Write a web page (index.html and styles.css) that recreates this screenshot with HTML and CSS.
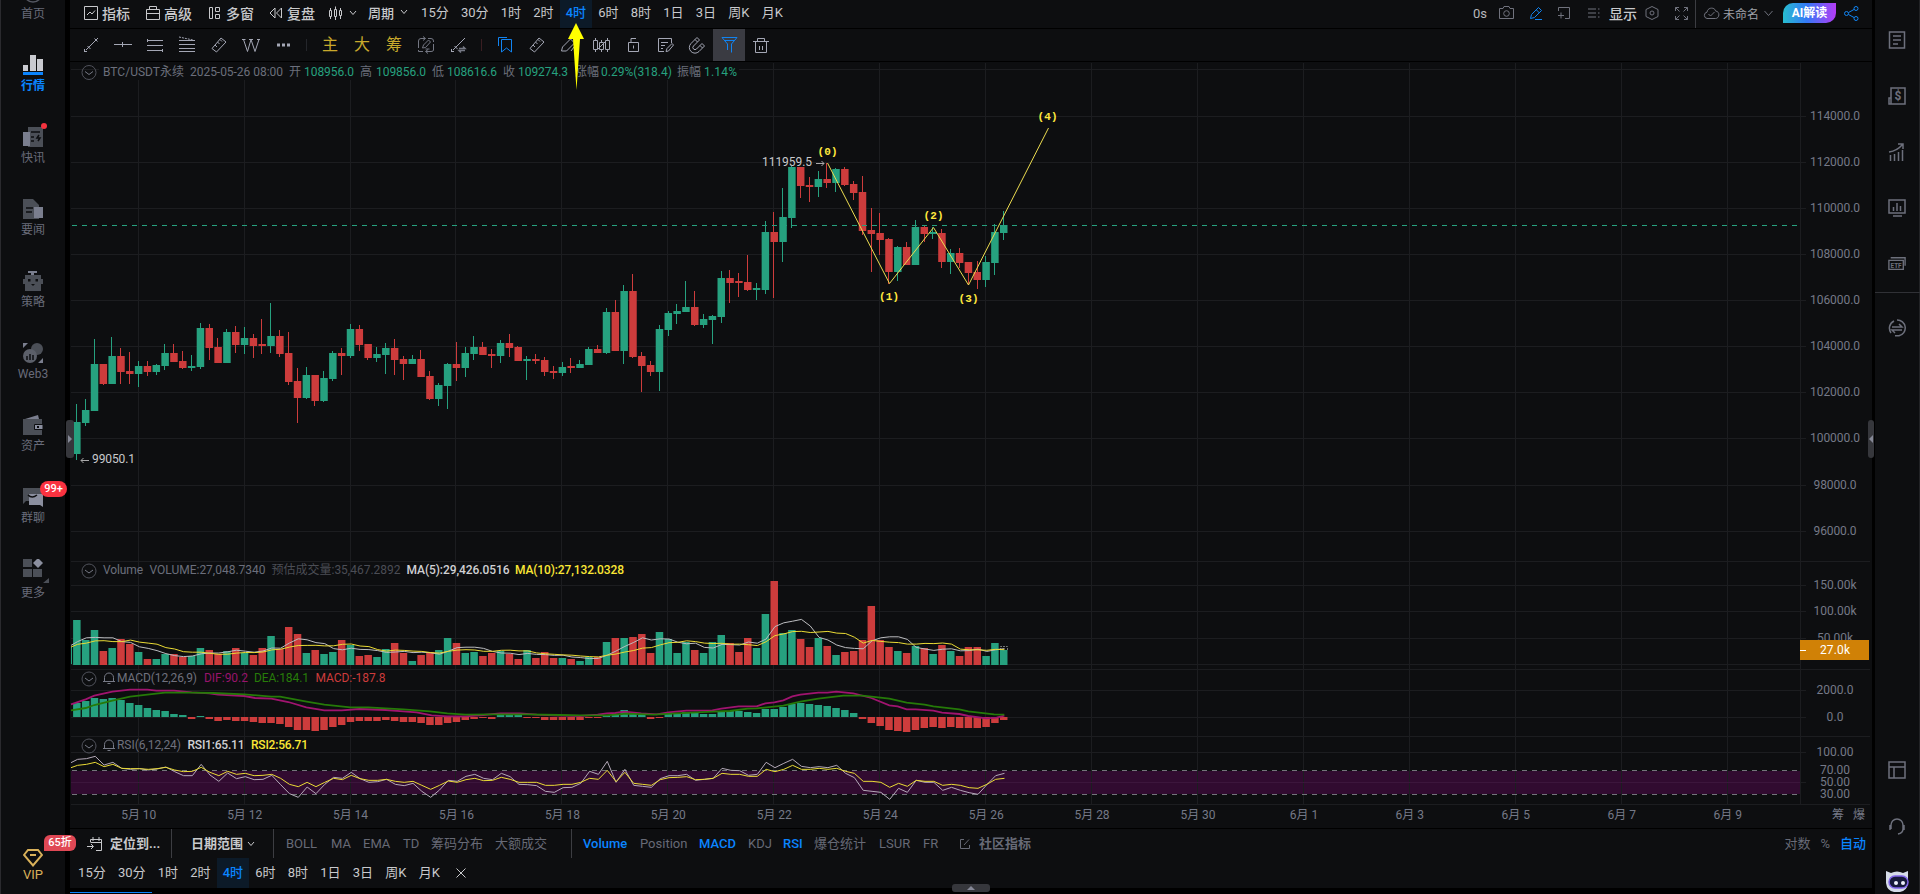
FILE: index.html
```html
<!DOCTYPE html>
<html lang="zh-CN">
<head>
    <meta charset="UTF-8">
    <meta name="viewport" content="width=device-width, initial-scale=1.0">
    <title>BTC/USDT永续</title>
    <link rel="stylesheet" href="styles.css">
</head>
<body>

<div class="app">
    <nav class="sidebar">
        <div class="nav-item">
            <svg width="20" height="20" viewBox="0 0 20 20"><circle cx="10" cy="10" r="9" fill="none" stroke="#555862" stroke-width="1.5"/></svg>
            <span>首页</span>
        </div>
        <div class="nav-item active">
            <svg width="20" height="20" viewBox="0 0 20 20"><path fill="#c9cad0" d="M0 10h5v6H0zM7 0h6v16H7zM14 4h6v12h-6z"/><path fill="#0a84ff" d="M0 17h20v3H0z"/></svg>
            <span>行情</span>
        </div>
        <div class="nav-item">
            <svg width="20" height="20" viewBox="0 0 20 20"><path fill="#4b4f57" d="M5 0h15v20H5z"/><path fill="#7a7e8e" d="M0 5h7v14H0z"/><path stroke="#0d0e10" stroke-width="1.5" fill="none" d="M8 5h9M8 10h3M8 14h3M16 8l-2 3h3l-2 3"/></svg>
            <i class="dot"></i>
            <span>快讯</span>
        </div>
        <div class="nav-item">
            <svg width="20" height="20" viewBox="0 0 20 20"><path fill="#4b4f57" d="M0 0h10l6 6v14H0z"/><path fill="#7a7e8e" d="M11 8h9v11h-9z"/><path stroke="#0d0e10" stroke-width="1.3" d="M3 9h7M3 13h6"/></svg>
            <span>要闻</span>
        </div>
        <div class="nav-item">
            <svg width="20" height="20" viewBox="0 0 20 20"><path fill="#7a7e8e" d="M5 0h9v2h-3v2H8V2H5z"/><path fill="#4b4f57" d="M2 4h16v16H2zM0 8h20v5H0z"/><path fill="#0d0e10" d="M5 8h2.500v2.500H5zM12.500 8H15v2.500h-2.500zM8 13h4l-2 2z"/></svg>
            <span>策略</span>
        </div>
        <div class="nav-item">
            <svg width="20" height="20" viewBox="0 0 20 20"><circle cx="14" cy="6" r="6" fill="#4b4f57"/><circle cx="7" cy="13" r="7" fill="#5b5f69"/><path fill="#7a7e8e" d="M0 0h5L0 5zM20 15v5h-5z"/><path stroke="#0d0e10" stroke-width="1.500" d="M4 13v4M7 11v6M10 12v5"/></svg>
            <span>Web3</span>
        </div>
        <div class="nav-item">
            <svg width="20" height="20" viewBox="0 0 20 20"><path fill="#7a7e8e" d="M2 4l13-4 1 4z"/><path fill="#4b4f57" d="M0 4h19v16H0z"/><path fill="#8b8f9f" stroke="#0d0e10" d="M11.500 9.500H20v5h-8.500z"/><path fill="#0d0e10" d="M14 11h2v2h-2z"/></svg>
            <span>资产</span>
        </div>
        <div class="nav-item">
            <svg width="20" height="20" viewBox="0 0 20 20"><path fill="#4b4f57" d="M0 1h20v13H3l-3 3z"/><path fill="#8b8f9f" d="M6 7h14v13l-3-2H6z"/><path fill="none" stroke="#0d0e10" stroke-width="1.500" d="M5 8q4 4 9 0"/></svg>
            <b class="badge">99+</b>
            <span>群聊</span>
        </div>
        <div class="nav-item more">
            <svg width="26" height="26" viewBox="0 0 26 26"><path fill="#4b4f57" d="M0 0h9v8H0zM0 10h9v8H0zM10 10h9v8h-9zM26 19v5h-6z"/><path fill="#8b8f9f" d="M15-1l5 5-5 5-5-5z"/></svg>
            <span>更多</span>
        </div>
        <div class="nav-item vip">
            <svg width="20" height="18" viewBox="0 0 20 18"><path fill="none" stroke="#d9b15a" stroke-width="2" d="M5 1h10l4 5-9 10.500L1 6zM7 6h6"/></svg>
            <b class="badge">65折</b>
            <span>VIP</span>
        </div>
    </nav>

    <main class="main">
        <header class="toolbar">
            <div class="menu">
                <a><svg width="14" height="14" viewBox="0 0 14 14"><path d="M.5.5h13v13H.5zM3 9l3-3 2 2 3-3.500"/></svg>指标</a>
                <a><svg width="14" height="14" viewBox="0 0 14 14"><path d="M.5 3.500h13v10H.5zM3.500 3V.5h7V3M.5 7.500h13"/></svg>高级</a>
                <a><svg width="14" height="14" viewBox="0 0 14 14"><path d="M1.500 1.500h3v11h-3zM7.500 1.500h4v4h-4zM7.500 8.500h4v4h-4z"/></svg>多窗</a>
                <a><svg width="14" height="14" viewBox="0 0 14 14"><path d="M6 2v10L1 7zM12.500 2v10l-5-5z"/></svg>复盘</a>
                <a><svg width="14" height="14" viewBox="0 0 14 14"><path d="M.5 4.500h2v6h-2zM1.500 2v2M1.500 11v2M5.500 3.500h2v7h-2zM6.500.5v3M6.500 11v3M10.500 4.500h2v5h-2zM11.500 2v2M11.500 10v3"/></svg><svg class="chev" width="8" height="6" viewBox="0 0 8 6"><path d="M1 1l3 3.500L7 1"/></svg></a>
                <a>周期<svg class="chev" width="8" height="6" viewBox="0 0 8 6"><path d="M1 1l3 3.500L7 1"/></svg></a>
            </div>
            <div class="periods">
                <a>15分</a><a>30分</a><a>1时</a><a>2时</a><a class="on">4时</a><a>6时</a><a>8时</a><a>1日</a><a>3日</a><a>周K</a><a>月K</a>
            </div>
            <div class="tools">
                <span>0s</span>
                <svg width="15" height="14" viewBox="0 0 15 14"><path d="M.5 2.500h3.500l1-2h5l1 2h3.500v10H.5z"/><circle cx="7.500" cy="7.500" r="2.800"/></svg>
                <svg class="blue" width="15" height="14" viewBox="0 0 15 14"><path d="M1.500 12.500l1-4 7-7 3 3-7 7zM7.500 4l3 3M6 13.500h7"/></svg>
                <svg width="14" height="14" viewBox="0 0 14 14"><path d="M.5 5V1.500h11v11H7M0 9.500h6M3 6.500v6"/></svg>
                <svg width="12" height="10" viewBox="0 0 12 10"><path d="M0 1h8M0 5h8M0 9h8M10 1h1.500M10 5h1.500M10 9h1.500"/></svg>
                <strong>显示</strong>
                <svg width="14" height="16" viewBox="0 0 14 16"><path d="M7 1.500l6 3v7l-6 3-6-3v-7z"/><circle cx="7" cy="8" r="2"/></svg>
                <svg width="13" height="13" viewBox="0 0 13 13"><path d="M.5 4V.5H4M.5.5l4 4M9 .5h3.500V4M12.500.5l-4 4M.5 9v3.500H4M.5 12.500l4-4M9 12.500h3.500V9M12.500 12.500l-4-4"/></svg>
            </div>
            <div class="layout">
                <svg width="17" height="13" viewBox="0 0 17 13"><path d="M4 11.500a3.200 3.200 0 0 1 0-6.300C4.500 0 12 0 12.500 4c5 .5 4 7.500 0 7.500zM5.500 7l2 2 4-4"/></svg>
                <span class="name">未命名</span>
                <svg width="9" height="7" viewBox="0 0 9 7"><path d="M.5 1l4 4.500 4-4.500"/></svg>
                <b class="ai">AI解读</b>
                <svg class="blue" width="15" height="15" viewBox="0 0 15 15"><circle cx="2.500" cy="7.500" r="2"/><circle cx="12" cy="2.500" r="2"/><circle cx="12" cy="12.500" r="2"/><path d="M4.500 6.500l5.500-3M4.500 8.500l5.500 3"/></svg>
            </div>
        </header>

        <div class="drawbar">
            <svg viewBox="0 0 32 32"><path d="M11 21L21 11M9.500 20v3M9 22.500h3M12.500 17l3 3M19.500 9.500l3 3M21 11l2-2"/></svg>
            <svg viewBox="0 0 32 32"><path d="M7 15.500h18M15.500 13v5"/></svg>
            <svg viewBox="0 0 32 32"><path d="M8 11.500h16M8 16.500h16M8 21.500h16M8.500 10v3M23.500 20v3"/></svg>
            <svg viewBox="0 0 32 32"><path d="M8 11.500h16M8 15.500h16M8 19.500h16M8 22.500h16"/><path d="M8 8l14 3" stroke-dasharray="2 1"/></svg>
            <svg viewBox="0 0 32 32"><path d="M9 19.500l9-10.500 5 4-9.500 10zM12 16l2 2M14.500 13l2 2M17 10.500l2 2"/></svg>
            <svg viewBox="0 0 32 32"><path d="M8.500 10.500l4 12 3.500-12 4 12 4-12M7 10.500h3.500M14 10.500h4M22 10.500h3"/></svg>
            <svg viewBox="0 0 32 32"><path class="fill" d="M10 14.500h3v3h-3zM15 14.500h3v3h-3zM20 14.500h3v3h-3z"/></svg>
            <i></i>
            <b>主</b><b>大</b><b>筹</b>
            <svg class="dim" viewBox="0 0 32 32"><path d="M8.500 19v-7q0-2.500 2.500-2.500h4M13 7.500l2.500 2-2.500 2M18 9.500h3q2.500 0 2.500 2.500v1M23.500 15v6q0 1.500-2.500 1.500h-5M18 20.500l-2.500 2 2.500 2M8.500 21v1.500H13M12.500 19l1-3 5-5 2 2-5 5.500zM15.500 20h4"/></svg>
            <svg viewBox="0 0 32 32"><path d="M11 21L21 11M9.500 20v3M9 22.500h3M12.500 17l3 3M21 11l2-2"/><path class="dimmer" d="M17 19.500h6l-2-2M23 21.500h-6l2 2"/></svg>
            <i class="red"></i>
            <svg class="blue" viewBox="0 0 32 32"><path d="M12.500 10.500h10v12.500l-5-4-5 4zM9.500 17V8.500h8.500"/></svg>
            <svg viewBox="0 0 32 32"><path d="M9 19.500l9-10.500 5 4-9.500 10zM12 16l2 2M14.500 13l2 2M17 10.500l2 2"/></svg>
            <svg viewBox="0 0 32 32"><path d="M8.500 22l1-4 8-8 4 4-8 8zM18 22l3-4"/></svg>
            <svg viewBox="0 0 32 32"><path d="M8.500 11.500h4v9h-4zM10.500 9v2M10.500 21v2M14.500 13.500h4v7h-4zM16.500 11v2M16.500 21v2M20.500 11.500h4v9h-4zM22.500 9v2M22.500 21v2M13 20l8-8"/></svg>
            <svg viewBox="0 0 32 32"><path d="M11.500 13.500h10v9h-10zM14 13V9.500h5M16.500 16.500v3"/></svg>
            <svg viewBox="0 0 32 32"><path d="M15 22.500H9.500v-13h13V14M12 13.500h7M12 16.500h4M12 19.500h2M17 22.500l1-3 5-5 1.500 1.500-5 6z"/></svg>
            <svg viewBox="0 0 32 32"><path d="M16 8.500l-6 6a5.500 5.500 0 0 0 8 8l5.500-5.500-2.500-2.500-5.500 5.500a2 2 0 0 1-3-3l6-6zM14 10.500l2.500 2.500M19 16.500l2.500 2.500"/></svg>
            <svg class="blue sel" viewBox="0 0 32 32"><path d="M9 8.500h15l-5.500 6.500v8.500M9 8.500l5.500 6.500v6M12 11.500h9"/></svg>
            <svg viewBox="0 0 32 32"><path d="M8 12.500h16M12.500 12V9.500h7V12M10.500 13v10.500h11V13M14.500 17v4M17.500 17v4"/></svg>
        </div>

        <section class="chart">
            <svg id="chart" width="1802" height="766" viewBox="70 62 1802 766"></svg>
        </section>

        <footer class="footer">
            <div class="indicators">
                <div class="locate"><svg width="16" height="14" viewBox="0 0 16 14"><path d="M3.500 5V2.500h11v11H9M3.500 5.500h11M6 0v4M12 0v4M0 9.500h6M4 7l2.500 2.500L4 12"/></svg>定位到...</div>
                <div class="range">日期范围<svg class="chev" width="8" height="6" viewBox="0 0 8 6"><path d="M1 1l3 3.500L7 1"/></svg></div>
                <div class="group main-ind"><span>BOLL</span><span>MA</span><span>EMA</span><span>TD</span><span>筹码分布</span><span>大额成交</span></div>
                <div class="group sub-ind"><span class="on">Volume</span><span>Position</span><span class="on">MACD</span><span>KDJ</span><span class="on">RSI</span><span>爆仓统计</span><span>LSUR</span><span>FR</span></div>
                <div class="community"><svg width="12" height="12" viewBox="0 0 12 12"><path d="M5 1.500H1.500v9h9V7M5 7l5-5.500"/></svg>社区指标</div>
                <div class="scale"><span>对数</span><span>%</span><span class="on">自动</span></div>
            </div>
            <div class="periods">
                <a>15分</a><a>30分</a><a>1时</a><a>2时</a><a class="on">4时</a><a>6时</a><a>8时</a><a>1日</a><a>3日</a><a>周K</a><a>月K</a>
                <svg class="close" width="10" height="10" viewBox="0 0 10 10"><path d="M.5.5l9 9M9.500.5l-9 9"/></svg>
            </div>
        </footer>
        <div class="bottom-line"></div>
    </main>

    <aside class="rail">
        <svg viewBox="0 0 18 18"><path d="M1.500 1h15v16h-15zM5 5h8M5 9h8M5 13h5"/></svg>
        <svg viewBox="0 0 18 18"><path d="M3 1h14v16H1v-6h2zM3 11v6"/><text x="10" y="13">$</text></svg>
        <svg viewBox="0 0 18 18"><path d="M2.500 18v-6M6.500 18v-7M10.500 18V9M14.500 18V7M1 9q8-1 14-8M10 1h5v5"/></svg>
        <svg viewBox="0 0 18 18"><path d="M1 1h16v13H1zM5.500 12V8M9 12V4M12.500 12V7M5 17h9"/></svg>
        <svg viewBox="0 0 20 18"><path d="M1 5h16v10H1zM3 2h16v9"/><text class="etf" x="9" y="13">ETF</text></svg>
        <hr>
        <svg viewBox="0 0 18 18"><path d="M3 14A8 8 0 0 1 6 2M9 1a8 8 0 0 1 2 15.800H7M4 8h10l-3-3M14 11H4l3 3"/></svg>
        <svg class="push" viewBox="0 0 18 18"><path d="M1 1h16v16H1zM1 6h16M6 6v11"/></svg>
        <svg viewBox="0 0 18 18"><path d="M3 12V8a6 6 0 0 1 12 0v4q0 4-5 5M2 8v5M16 8v5"/></svg>
        <svg class="robot" viewBox="0 0 24 24"><path class="head" d="M1 1l5 2q6-3 12 0l5-2v12q-1 8-8 9h-6q-7-1-8-9z"/><rect x="4" y="6" width="19" height="12" rx="6"/><circle cx="11" cy="13" r="2"/><circle cx="18" cy="13" r="2"/></svg>
    </aside>

    <div class="handle left"></div>
    <div class="handle right"></div>
    <div class="handle bottom"></div>
    <svg class="pointer" width="16" height="67" viewBox="0 0 16 67"><path d="M8 0l8 16h-4L8.500 67 5 16H0z"/></svg>
</div>

<script src="chart.js"></script>
</body>
</html>
```

FILE: styles.css
```css
* {
    box-sizing: border-box;
}

body {
    margin: 0;
    background: #000;
    color: #c8c9cc;
    font-family: Roboto, "Noto Sans CJK SC", sans-serif;
    font-size: 13px;
    overflow: hidden;
}

svg {
    display: block;
    flex: none;
    fill: none;
    stroke: currentColor;
}

.app {
    position: relative;
    display: flex;
    width: 1920px;
    height: 894px;
    overflow: hidden;
}

/* left navigation */
.sidebar {
    display: flex;
    flex-direction: column;
    width: 65px;
    height: 911px;
    margin-top: -17px;
    background: #0d0e10;
    border-left: 1px solid #2a2a2e;
}

.nav-item {
    position: relative;
    display: flex;
    flex-direction: column;
    align-items: center;
    flex: none;
    height: 72px;
    font-size: 12px;
    line-height: 16px;
    color: #686b79;
}

.nav-item svg {
    stroke: none;
}

.nav-item span {
    margin-top: 3px;
}

.nav-item.active {
    color: #0a84ff;
    font-weight: bold;
}

.more svg {
    margin-left: 6px;
    margin-bottom: -3px;
}

.vip {
    margin-top: auto;
    height: 45px;
    color: #d9b15a;
}

.vip span {
    margin-top: 0;
    font-size: 13px;
}

.dot {
    position: absolute;
    top: -4px;
    right: 18px;
    width: 6px;
    height: 6px;
    border-radius: 3px;
    background: #f5333f;
}

.badge {
    position: absolute;
    top: -6px;
    left: 39px;
    width: 27px;
    height: 16px;
    border-radius: 8px;
    background: #fa3240;
    color: #fff;
    font-size: 11px;
    font-weight: 500;
    line-height: 16px;
    text-align: center;
    z-index: 2;
}

.vip .badge {
    top: -14px;
    left: 43px;
    width: 32px;
    border-radius: 6px 6px 6px 0;
    background: #e04855;
}

/* main area */
.main {
    display: flex;
    flex-direction: column;
    width: 1802px;
    margin-left: 5px;
}

.toolbar {
    display: flex;
    height: 28px;
    padding-left: 14px;
    background: #0d0e10;
}

.menu {
    display: grid;
    grid-template-columns: 62px 62px 61px 60px 39px 46px;
    height: 25px;
    font-size: 14px;
    font-weight: 500;
}

.menu a {
    display: flex;
    align-items: center;
    gap: 4px;
}

.menu a:nth-child(5), .menu a:nth-child(6) {
    gap: 6px;
}

.menu a:nth-child(6) {
    padding-bottom: 1px;
    font-size: 13px;
}

.periods {
    display: flex;
    height: 28px;
    padding-left: 1px;
}

.periods a {
    padding: 0 6.1px;
    line-height: 25px;
}

.periods a.on {
    background: #0c1a28;
    color: #0a84ff;
    font-weight: 500;
}

.tools {
    display: grid;
    grid-template-columns: 26px 30px 29px 30px 21px 36px 30px 20px;
    align-items: center;
    height: 26px;
    margin-left: auto;
    color: #70727d;
}

.tools span {
    color: #b7b8bc;
}

.tools strong {
    padding-bottom: 1px;
    color: #c8c9cc;
    font-size: 14px;
    font-weight: 500;
}

.layout {
    display: grid;
    grid-template-columns: 20px 41px 19px 61px 28px;
    align-items: center;
    height: 28px;
    padding-left: 7px;
    padding-bottom: 2px;
    border-left: 1px solid #3c3d42;
    color: #70727d;
}

.name {
    color: #9fa1a8;
    font-size: 12px;
}

.ai {
    width: 53px;
    height: 20px;
    border-radius: 10px 0 10px 0;
    background: linear-gradient(90deg, #27bdcf, #3478f6 45%, #b43cf5);
    color: #fff;
    font-size: 12px;
    line-height: 20px;
    text-align: center;
}

.blue {
    color: #1184f2;
}

.drawbar {
    display: grid;
    grid-template-columns: repeat(7, 32px) 15px repeat(5, 32px) 15px repeat(9, 32px);
    height: 32px;
    margin-top: 1px;
    padding-left: 5px;
    background: #0d0e10;
    color: #a4a7b5;
}

.drawbar svg {
    width: 32px;
    height: 32px;
}

.drawbar svg.blue {
    color: #1184f2;
}

.drawbar .dim {
    color: #747783;
}

.dimmer {
    stroke: #747783;
    stroke-width: 1.500;
}

.drawbar .sel {
    background: #3a3b42;
}

.fill {
    fill: currentColor;
    stroke: none;
}

.drawbar i {
    width: 1px;
    height: 12px;
    margin: 10px 0 0 7px;
    background: #24262b;
}

.drawbar .red {
    background: #3a1e22;
}

.drawbar b {
    color: #c9a92c;
    font-size: 16px;
    font-weight: 400;
    line-height: 32px;
    text-align: center;
}

.chart {
    height: 766px;
    margin-top: 1px;
    background: #0d0e10;
}

/* canvas text */
.t {
    font-size: 12px;
    stroke: none;
    fill: #686b77;
}

.wave {
    font: bold 11px "Liberation Mono", monospace;
    fill: #ffe93e;
    stroke: none;
    text-anchor: middle;
}

/* footer */
.footer {
    height: 59px;
    margin-top: 1px;
    background: #0d0e10;
}

.indicators {
    display: flex;
    height: 29px;
    line-height: 30px;
    color: #676a76;
}

.locate, .range {
    display: flex;
    align-items: center;
    height: 29px;
    border-right: 1px solid #3c3d42;
    color: #c8c9cc;
    font-weight: bold;
}

.locate {
    width: 102px;
    padding-left: 17px;
    gap: 7px;
}

.range {
    width: 102px;
    padding-left: 19px;
    gap: 4px;
}

.group {
    display: grid;
}

.main-ind {
    grid-template-columns: 45px 32px 40px 28px 64px 76px;
    width: 298px;
    padding-left: 12px;
    border-right: 1px solid #3c3d42;
}

.sub-ind {
    grid-template-columns: 57px 59px 49px 35px 31px 65px 44px 36px;
    padding-left: 11px;
}

.indicators .on {
    color: #0a84ff;
    font-weight: 500;
}

.community {
    display: flex;
    align-items: center;
    gap: 8px;
    font-weight: bold;
}

.scale {
    display: flex;
    gap: 10px;
    margin-left: auto;
    padding-right: 6px;
}

.footer .periods {
    height: 30px;
    padding-left: 2px;
}

.footer .periods a {
    line-height: 30px;
}

.close {
    margin: 10px 0 0 10px;
}

.bottom-line {
    width: 82px;
    height: 1px;
    margin-top: 4px;
    background: #0a84ff;
}

/* right rail */
.rail {
    display: flex;
    flex-direction: column;
    align-items: center;
    width: 45px;
    height: 910px;
    margin-left: 3px;
    padding-top: 12px;
    background: #0d0e10;
    border-right: 1px solid #222326;
    color: #6d707c;
}

.rail svg {
    width: 18px;
    height: 18px;
    margin: 19px 0;
    stroke-width: 1.500;
}

.rail text {
    fill: currentColor;
    stroke: none;
    font-size: 12px;
    font-weight: bold;
    text-anchor: middle;
}

.rail .etf {
    font-size: 7px;
}

.rail hr {
    width: 45px;
    height: 1px;
    margin: 0 0 7px;
    border: 0;
    flex: none;
    background: #303136;
}

.rail .push {
    margin-top: auto;
}

.rail .robot {
    width: 24px;
    height: 24px;
    margin: 16px 0;
    stroke: none;
    fill: #eef0fa;
}

.robot .head {
    fill: #d5dbe8;
}

.robot rect {
    fill: #171a3a;
    stroke: #8065e8;
}

/* panel handles */
.handle {
    position: absolute;
    display: flex;
    align-items: center;
    justify-content: center;
    background: #36373c;
    border-radius: 3px;
}

.handle::after {
    content: "";
    border: 4px solid transparent;
}

.left {
    left: 66px;
    top: 420px;
    width: 8px;
    height: 38px;
}

.left::after {
    margin-left: 4px;
    border-left-color: #858896;
}

.right {
    left: 1868px;
    top: 420px;
    width: 6px;
    height: 38px;
}

.right::after {
    margin-left: -4px;
    border-right-color: #858896;
}

.bottom {
    left: 952px;
    top: 884px;
    width: 38px;
    height: 8px;
}

.bottom::after {
    margin-top: -4px;
    border-bottom-color: #858896;
}

.pointer {
    position: absolute;
    left: 568px;
    top: 23px;
    fill: #ff0;
    stroke: none;
}
```

FILE: chart.js
```js
var GREEN = "#26a17f";
var RED = "#cd3c3c";
var GRID = "#1c1d20";
var LEFT = 71;
var AXIS = 1800;
var FIRST = 76.6;
var STEP = 8.8275;

// high, open/close top, open/close bottom, low, up = 1
var candles = [
    [404,422,454,460,1],[399,410,423,426,1],[339,364,411,411,1],[364,364,384,385,0],[337,356,384,384,1],
    [348,356,372,384,0],[352,371,374,384,0],[361,366,374,387,1],[361,366,372,376,0],[364,365,372,375,1],
    [344,353,366,370,1],[344,353,362,362,0],[351,361,368,369,0],[355,366,368,371,1],[323,328,367,369,1],
    [324,328,348,360,0],[338,347,363,363,0],[329,332,363,363,1],[326,332,345,353,0],[327,338,345,354,1],
    [334,338,346,358,0],[319,344,346,354,0],[303,336,346,353,1],[330,336,354,357,0],[332,353,382,385,0],
    [368,381,398,423,0],[367,375,398,399,1],[375,375,401,406,0],[371,378,401,402,1],[351,353,379,381,1],
    [348,353,356,375,0],[324,329,356,358,1],[325,329,345,351,0],[344,344,358,360,0],[347,354,358,362,1],
    [343,348,355,374,1],[339,348,360,375,0],[356,359,364,380,0],[355,359,364,364,1],[350,359,377,377,0],
    [371,376,399,400,0],[383,385,399,406,1],[363,364,386,409,1],[342,364,368,381,0],[347,353,368,377,1],
    [336,347,354,360,1],[342,347,355,355,0],[349,354,356,368,0],[340,343,356,363,1],[334,343,348,357,0],
    [346,347,361,361,0],[356,359,361,380,1],[354,359,361,364,0],[357,360,372,376,0],[366,371,373,379,0],
    [362,367,373,376,1],[358,366,368,373,0],[360,364,368,368,1],[347,349,365,365,1],[345,349,353,353,0],
    [308,312,353,354,1],[300,312,351,351,0],[285,291,351,364,1],[274,291,357,358,0],[352,356,366,392,0],
    [361,365,372,376,0],[325,329,372,391,1],[311,313,330,336,1],[304,311,314,324,1],[281,307,312,312,1],
    [291,307,325,326,0],[314,319,325,328,1],[315,316,320,344,1],[271,278,317,323,1],[270,278,283,303,0],
    [273,281,283,297,0],[255,282,290,291,0],[283,288,290,300,1],[221,232,290,294,1],[212,232,242,298,0],
    [188,217,242,262,1],[166,167,218,228,1],[167,167,186,198,0],[177,185,187,202,0],[171,179,187,197,1],
    [163,179,183,188,0],[168,169,183,192,1],[167,169,185,186,0],[181,184,193,200,0],[176,192,231,235,0],
    [208,230,234,272,0],[213,233,240,255,0],[238,239,272,284,0],[246,247,272,281,1],[242,247,265,265,0],
    [220,227,265,265,1],[226,227,234,242,0],[227,232,234,239,1],[229,233,262,268,0],[249,253,262,274,1],
    [248,253,263,268,0],[262,262,273,285,0],[261,272,280,289,0],[256,262,280,287,1],[224,232,263,275,1],
    [211,225,233,240,1]
];

// the first nine values lie before the visible range
var volume = [13,13,12,26,26,6,33,16,17,
    45,25,35,14,17,26,21,13,6,6,11,11,8,9,17,15,11,14,17,12,10,17,29,16,38,31,12,15,11,13,25,20,9,10,8,16,
    22,12,4,10,13,15,27,22,12,13,9,12,14,11,6,15,7,13,7,7,6,4,8,8,23,27,27,28,31,12,33,26,12,23,15,12,23,
    30,22,13,27,17,51,84,32,35,26,18,27,19,10,13,14,25,59,25,18,14,12,19,17,11,20,14,9,18,18,9,22,15];

var macd = [14,16,19,18,19,17,14,12,9,7,6,3,2,-2,1,-2,-4,-3,-4,-4,-5,-6,-6,-7,-10,-13,-13,-14,-13,-10,-8,
    -5,-4,-4,-4,-3,-4,-5,-5,-6,-8,-8,-6,-5,-3,-2,-1,-2,2,2,2,-1,-1,-3,-3,-3,-3,-3,-1,-1,2,2,7,4,2,-2,-1,
    3,4,5,4,3,3,5,6,6,5,4,8,8,10,13,14,13,12,11,9,7,4,-2,-6,-9,-13,-14,-15,-13,-11,-10,-11,-10,-11,-11,
    -11,-10,-6,-3];

// lines in thirds of a pixel, origin at 60,550
var dif = "33,463 77,448 103,437 157,425 210,419 262,419 289,422 342,422 395,427 448,430 474,434 553,438 585,444 634,446 685,456 739,472 793,481 845,481 898,477 977,480 1030,484 1070,487 1115,496 1162,499 1216,499 1270,495 1321,490 1380,490 1430,494 1480,496 1560,498 1613,494 1640,490 1666,489 1693,485 1744,490 1790,493 1825,487 1879,482 1957,481 1984,476 2036,469 2090,469 2116,460 2143,457 2170,451 2197,439 2221,434 2275,428 2302,428 2329,425 2380,430 2434,444 2488,466 2513,469 2540,478 2567,478 2620,482 2646,488 2698,492 2725,498 2779,505 2810,503 2833,497";
var dea = "33,481 77,474 103,465 157,452 210,440 262,434 315,428 395,428 460,429 553,433 634,440 660,440 740,455 793,464 871,472 925,472 977,475 1030,478 1110,484 1162,490 1216,494 1300,493 1400,493 1500,495 1560,496 1640,496 1700,491 1780,494 1850,490 1957,485 2010,483 2063,476 2090,475 2170,467 2221,455 2275,446 2350,437 2407,437 2488,446 2540,458 2594,464 2620,469 2698,478 2725,484 2802,493 2833,494";
var rsi1 = [628,626,619,645,637,655,658,656,660,657,651,665,677,677,643,675,694,669,686,680,689,688,676,704,731,
    742,711,731,703,682,685,667,686,697,695,688,703,707,700,724,742,720,691,694,679,673,685,689,670,680,703,
    704,707,724,727,713,712,700,664,673,634,697,658,706,709,712,686,677,677,673,691,688,685,655,661,662,676,
    673,637,653,640,628,649,653,650,653,646,670,683,721,724,727,748,715,727,691,697,697,721,712,721,728,733,
    704,677,670];
var rsi2 = [646,643,637,650,643,655,656,656,658,656,652,660,665,664,652,667,677,664,673,670,677,676,673,685,703,
    710,697,710,697,685,689,676,686,691,691,688,694,697,694,706,718,706,693,697,689,685,692,691,682,688,697,
    697,697,706,706,703,703,697,685,688,661,695,667,700,703,706,689,683,682,680,689,688,685,670,673,673,679,
    679,658,665,658,646,658,658,655,658,655,664,670,694,694,697,712,700,709,691,694,694,706,703,706,713,715,
    703,688,685];

var out = "";

function rect(x, y, w, h, color) {
    out += '<rect x="' + x + '" y="' + y + '" width="' + w + '" height="' + h + '" fill="' + color + '" stroke="none"/>';
}

function text(str, x, y, width, color, bold) {
    out += '<text class="t" x="' + x + '" y="' + y + '" textLength="' + width + '" style="fill:' + (color || "#6b6e7b") +
        (bold ? ";font-weight:500" : "") + '">' + str + '</text>';
}

function label(str, x, y, width) {
    text(str, x - width / 2, y + 4, width, "#757987");
}

function line(points, color, width) {
    out += '<polyline points="' + points + '" stroke="' + color + '" stroke-width="' + (width || 1) + '"/>';
}

function thirds(points) {
    return points.split(" ").map(function (p) {
        var xy = p.split(",");
        return (60 + xy[0] / 3) + "," + (550 + xy[1] / 3);
    }).join(" ");
}

function center(i) {
    return FIRST + STEP * i;
}

function drawGrid() {
    [69,116,162,208,254,300,346,392,438,485,531,585,611,638,664,690,717,752,782].forEach(function (y) {
        rect(LEFT, y, (y === 69 || y === 664 ? AXIS : AXIS + 6) - LEFT, 1, GRID);
    });
    [561,669,736,804].forEach(function (y) {
        rect(LEFT, y, 1799, 1, GRID);
    });
    for (var k = 0; k < 16; k++) {
        rect(Math.round(137.7 + 105.93 * k), 63, 1, 741, GRID);
    }
    rect(AXIS, 63, 1, 741, GRID);
}

function drawAxis() {
    for (var p = 0; p < 10; p++) {
        var y = [116,162,208,254,300,346,392,438,485,531][p];
        var price = 114000 - p * 2000;
        label(price + ".0", 1835, y, price > 99999 ? 50 : 43);
    }
    label("150.00k", 1835, 585, 43);
    label("100.00k", 1835, 611, 43);
    label("50.00k", 1835, 638, 36);
    label("2000.0", 1835, 690, 37);
    label("0.0", 1835, 717, 17);
    label("100.00", 1835, 752, 37);
    label("70.00", 1835, 770, 30);
    label("50.00", 1835, 782, 30);
    label("30.00", 1835, 794, 30);
    rect(1800, 640, 69, 20, "#d08106");
    rect(1800, 650, 6, 1, "#fff");
    text("27.0k", 1820, 654, 30, "#fff");

    var days = ["5月 10","5月 12","5月 14","5月 16","5月 18","5月 20","5月 22","5月 24","5月 26","5月 28","5月 30",
        "6月 1","6月 3","6月 5","6月 7","6月 9"];
    days.forEach(function (d, i) {
        label(d, 138.7 + 105.93 * i, 814.5, d.length > 4 ? 35 : 28.5);
    });
    label("筹", 1838, 815, 12);
    label("爆", 1859, 815, 12);
}

function drawCandles() {
    candles.forEach(function (c, i) {
        var color = c[4] ? GREEN : RED;
        var x = center(i);
        rect(Math.floor(x), c[0], 1, Math.max(1, c[3] - c[0]), color);
        rect(x - 3.5, c[1], 7.5, c[2] - c[1], color);
    });
    rect(LEFT, 647, 1, 17, GREEN);
    candles.forEach(function (c, i) {
        var h = volume[i + 9];
        rect(center(i) - 3.5, 665 - h, 7.5, h, c[4] ? GREEN : RED);
        var m = macd[i];
        rect(center(i) - 3.5, m > 0 ? 717 - m : 717, 7.5, Math.abs(m), m > 0 ? GREEN : RED);
    });
    out += '<path d="M1000.500 650v-3.500h7v3.500" stroke="#777" stroke-dasharray="2 1"/>';
}

// moving average of the volume bars
function average(n) {
    var points = [];
    for (var i = -1; i < candles.length; i++) {
        var sum = 0, from = Math.max(0, i + 10 - n);
        for (var k = from; k < i + 10; k++) sum += volume[k];
        points.push(Math.max(LEFT, center(i) + 1) + "," + (665 - sum / (i + 10 - from)));
    }
    return points.join(" ");
}

function rsiLine(values, start, color) {
    var points = [LEFT + "," + (550 + start / 3)];
    values.forEach(function (v, i) {
        points.push((center(i) + 1) + "," + (550 + v / 3));
    });
    line(points.join(" "), color);
}

function collapse(y, bell) {
    out += '<circle cx="89" cy="' + y + '" r="7" stroke="#50525b"/><path d="M85 ' + (y - 1) + 'l4 3 4-3" stroke="#777a86"/>';
    if (bell) {
        out += '<path d="M103 ' + (y + 2.5) + 'h12M104.500 ' + (y + 2.5) + 'v-4a4.500 4.500 0 0 1 9 0v4M107.500 ' + (y + 4.5) + 'h3" stroke="#777a86"/>';
    }
}

function drawLegends() {
    var grey = "#6f717d";
    rect(99, 63, 640, 17, "#0d0e10");
    collapse(72.5);
    text("BTC/USDT永续", 103, 76, 81);
    text("2025-05-26 08:00", 190, 76, 93);
    text("开", 289, 76, 12);
    text("108956.0", 304, 76, 50, GREEN);
    text("高", 360, 76, 12);
    text("109856.0", 376, 76, 50, GREEN);
    text("低", 432, 76, 12);
    text("108616.6", 447, 76, 50, GREEN);
    text("收", 503, 76, 12);
    text("109274.3", 518, 76, 50, GREEN);
    text("涨幅", 575, 76, 24);
    text("0.29%(318.4)", 601, 76, 71, GREEN);
    text("振幅", 677, 76, 24);
    text("1.14%", 704, 76, 33, GREEN);

    collapse(571);
    text("Volume", 103, 574, 40);
    text("VOLUME:27,048.7340", 149.5, 574, 116);
    text("预估成交量:35,467.2892", 271.5, 574, 129, "#4b4d55");
    text("MA(5):29,426.0516", 406.5, 574, 103, "#d0d0d3", true);
    text("MA(10):27,132.0328", 515, 574, 109, "#fbe735", true);

    collapse(679, true);
    text("MACD(12,26,9)", 117, 682, 80, grey);
    text("DIF:90.2", 204, 682, 44, "#98146c");
    text("DEA:184.1", 254, 682, 55, "#277c09");
    text("MACD:-187.8", 315.5, 682, 70, "#cd3c3c");

    collapse(746, true);
    text("RSI(6,12,24)", 117, 749, 64, grey);
    text("RSI1:65.11", 187.5, 749, 57, "#d0d0d3", true);
    text("RSI2:56.71", 251, 749, 57, "#fbe735", true);
}

function drawOverlays() {
    out += '<path d="M72 225.500H1800" stroke="' + GREEN + '" stroke-dasharray="5 5"/>';
    line("827.5,163 889.5,283.5 933.5,227.5 968.5,285 1048.5,128", "#ecdc50");
    [["(0)",827.5,151],["(1)",889,296],["(2)",933.5,215],["(3)",968.5,298],["(4)",1047.5,116]].forEach(function (w) {
        out += '<text class="wave" x="' + w[1] + '" y="' + (w[2] + 4) + '" textLength="20">' + w[0] + '</text>';
    });
    text("111959.5", 762, 166, 50, "#c8c9cc");
    text("99050.1", 92, 463, 43, "#c8c9cc");
    out += '<path d="M816 163.500h8M821.500 161l2.500 2.500-2.500 2.500M89 460.500h-8M83.500 458l-2.500 2.500 2.500 2.500" stroke="#aaa"/>';
}

rect(LEFT, 771, AXIS - LEFT, 23, "#310b30");
drawGrid();
rect(LEFT, 782, AXIS - LEFT, 1, "#3c163c");
out += '<path d="M72 770.500H1800M72 794.500H1800" stroke="#73747a" stroke-dasharray="5 5"/>';
drawAxis();
drawCandles();
line(average(5), "#bcbdc0");
line(average(10), "#eadb35");
line(thirds(dif), "#a0146f", 1.8);
line(thirds(dea), "#257a08", 1.8);
rsiLine(rsi1, 638, "#b4a9b8");
rsiLine(rsi2, 653, "#eadb35");
drawLegends();
drawOverlays();

document.getElementById("chart").innerHTML = out;
```
